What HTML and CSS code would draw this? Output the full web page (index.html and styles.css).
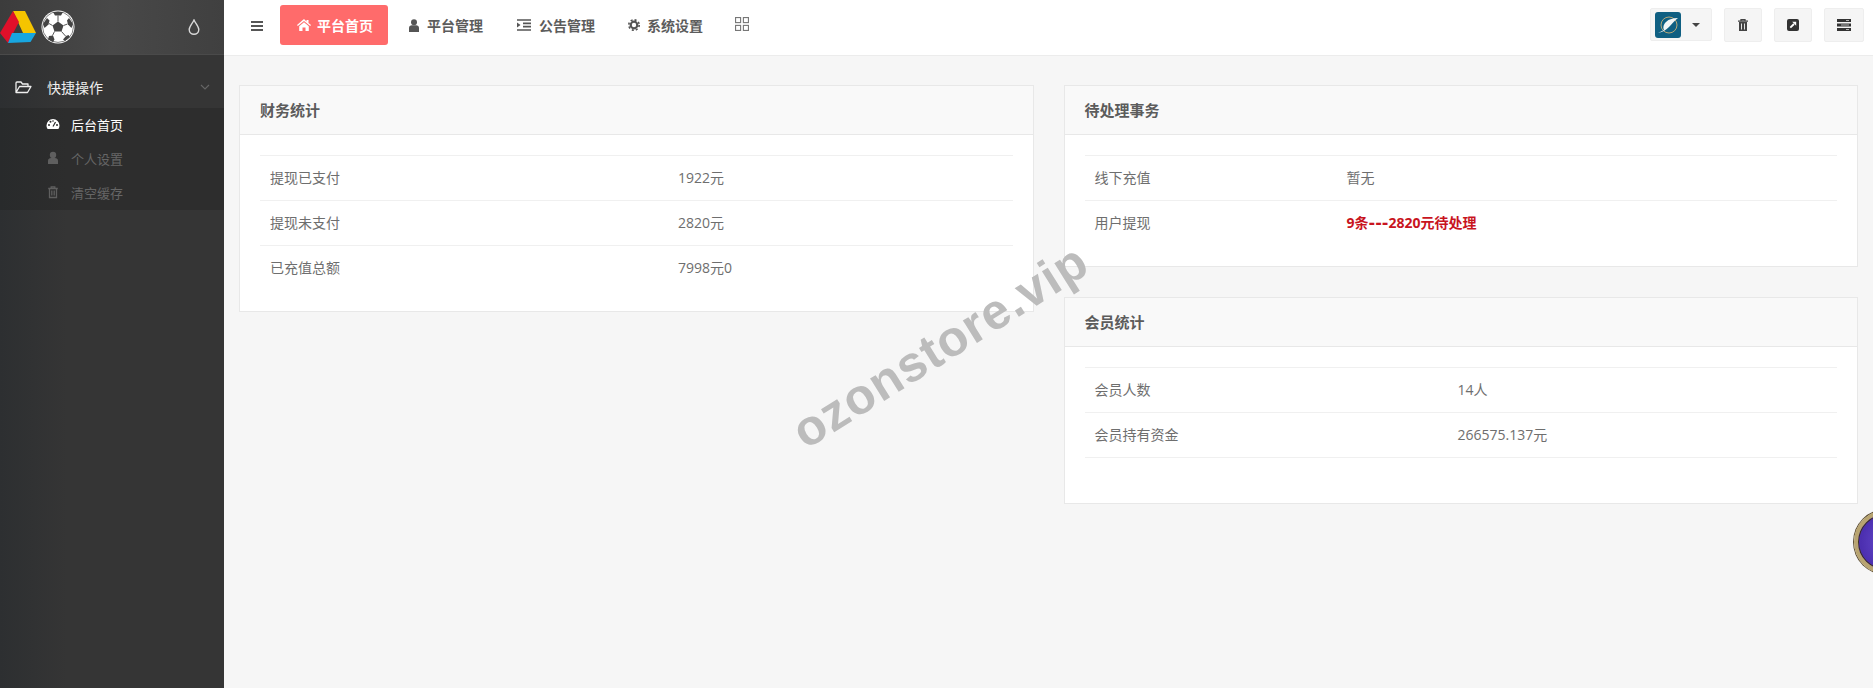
FILE: index.html
```html
<!DOCTYPE html>
<html lang="zh">
<head>
<meta charset="utf-8">
<title>平台首页</title>
<link rel="stylesheet" href="styles.css">
</head>
<body>
<div class="app">
  <aside class="sidebar">
    <div class="brand">
      <svg class="logo" viewBox="0 0 36 32" width="36" height="32">
        <polygon fill="#f5c400" points="13,0 25,0 36,22 23,22"/>
        <polygon fill="#e0102a" points="13,0 19,11 8,32 0,22"/>
        <polygon fill="#18a6e0" points="12,22 36,22 30.500,31 8,32"/>
      </svg>
      <svg class="ball" viewBox="0 0 34 34" width="34" height="34">
        <circle cx="17" cy="17" r="16.500" fill="#fff"/>
        <circle cx="17" cy="17" r="15.400" fill="none" stroke="#4a4a4a" stroke-width=".7"/>
        <g fill="#444">
          <polygon points="17,11.500 22.500,15.500 20.500,21.500 13.500,21.500 11.500,15.500"/>
          <polygon points="12,2 22,2 20,5.500 14,5.500"/>
          <polygon points="28,8 32,14 30.500,18 27,14.500 26,10.500"/>
          <polygon points="2,14 6,8 8.500,10.500 7.500,14.500 3.500,18"/>
          <polygon points="8,26 12,25.500 13.500,29.500 12,32 7,29.500"/>
          <polygon points="25,26 27.500,25 29,27 24,31 22,29.500"/>
        </g>
        <path d="M17 11.500V5.500M22.500 15.500l4-1.500M20.500 21.500l4 4.500M13.500 21.500l-2 4M11.500 15.500l-3.500-2" stroke="#444" stroke-width=".9" fill="none"/>
      </svg>
      <svg class="drop" viewBox="0 0 12 16" width="12" height="16">
        <path d="M6 1C4.800 4 1.200 7.500 1.200 10.500a4.800 4.800 0 0 0 9.600 0C10.800 7.500 7.200 4 6 1z" fill="none" stroke="#d8d8d8" stroke-width="1.400"/>
      </svg>
    </div>
    <nav class="menu">
      <div class="menu-head">
        <svg class="menu-icon" viewBox="0 0 17 13" width="17" height="13">
          <path d="M1 11.500V2a1 1 0 0 1 1-1h4l1.500 2H13v2.500M1 11.500h11.500L16 5.500H4.500z" fill="none" stroke="#eee" stroke-width="1.300" stroke-linejoin="round"/>
        </svg>
        <span class="menu-label">快捷操作</span>
        <svg class="chev" viewBox="0 0 10 6" width="10" height="6"><path d="M1 1l4 4 4-4" fill="none" stroke="#666" stroke-width="1.100"/></svg>
      </div>
      <ul class="submenu">
        <li class="sub-item active">
          <svg class="sub-icon" viewBox="0 0 14 12" width="14" height="12">
            <path d="M7 1a6.500 6.500 0 0 0-6.500 6.500c0 1.500.5 2.900 1.300 3.500h10.400c.8-.6 1.300-2 1.300-3.500A6.500 6.500 0 0 0 7 1z" fill="#fff"/>
            <path d="M7 8.500L9.500 4" stroke="#2b2b2b" stroke-width="1.200"/>
            <circle cx="3" cy="7" r="1" fill="#2b2b2b"/><circle cx="4.500" cy="3.800" r="1" fill="#2b2b2b"/><circle cx="7" cy="3" r=".8" fill="#2b2b2b"/><circle cx="11" cy="7" r="1" fill="#2b2b2b"/>
          </svg>
          <span>后台首页</span>
        </li>
        <li class="sub-item">
          <svg class="sub-icon" viewBox="0 0 14 14" width="14" height="14">
            <circle cx="7" cy="4" r="3.200" fill="#5f5f5f"/><path d="M2 13V9.500C2 8 3.500 7 5 7h4c1.500 0 3 1 3 2.500V13z" fill="#5f5f5f"/>
          </svg>
          <span>个人设置</span>
        </li>
        <li class="sub-item">
          <svg class="sub-icon" viewBox="0 0 14 14" width="14" height="14">
            <path d="M2.200 3.500h9.600M5.200 3.500V1.800h3.600v1.700M3.500 3.500v9h7v-9M5.800 5.500v5M8.200 5.500v5" fill="none" stroke="#5f5f5f" stroke-width="1.300"/>
          </svg>
          <span>清空缓存</span>
        </li>
      </ul>
    </nav>
  </aside>

  <div class="main">
    <header class="topbar">
      <svg class="burger" viewBox="0 0 12 10" width="12" height="10"><path d="M0 1h12M0 5h12M0 9h12" stroke="#555" stroke-width="1.800"/></svg>
      <a class="tab tab-active">
        <svg viewBox="0 0 14 12" width="14" height="12"><path d="M7 0L0 6l.8 1L7 2l6.200 5 .8-1-2.500-2V1h-2v1.400zM2.200 7.200V12h3.300V8.500h3V12h3.300V7.200L7 3.300z" fill="#fff"/></svg>
        <span>平台首页</span>
      </a>
      <a class="tab">
        <svg viewBox="0 0 10 13" width="10" height="13"><circle cx="5" cy="3.300" r="3" fill="#555"/><path d="M0 13V8.800C0 7.300 1.300 6.300 2.800 6.300h4.400C8.700 6.300 10 7.300 10 8.800V13z" fill="#555"/></svg>
        <span>平台管理</span>
      </a>
      <a class="tab">
        <svg viewBox="0 0 14 12" width="14" height="12"><path d="M0 1h14M6 4.300h8M6 7.700h8M0 11h14" stroke="#555" stroke-width="1.700"/><path d="M0 3.500L3.500 6 0 8.500z" fill="#555"/></svg>
        <span>公告管理</span>
      </a>
      <a class="tab tab-gear">
        <svg viewBox="0 0 12 12" width="12" height="12"><circle cx="6" cy="6" r="3.300" fill="none" stroke="#555" stroke-width="2.200"/><circle cx="6" cy="6" r="5.200" fill="none" stroke="#555" stroke-width="1.600" stroke-dasharray="2.040 2.040"/></svg>
        <span>系统设置</span>
      </a>
      <svg class="grid-icon" viewBox="0 0 15 15" width="14" height="14"><g fill="none" stroke="#777" stroke-width="1.200"><rect x=".6" y=".6" width="5.400" height="5.400"/><rect x="9" y=".6" width="5.400" height="5.400"/><rect x=".6" y="9" width="5.400" height="5.400"/><rect x="9" y="9" width="5.400" height="5.400"/></g></svg>
      <div class="tools">
        <div class="user-btn">
          <svg class="avatar" viewBox="0 0 26 26" width="26" height="26">
            <rect width="26" height="26" rx="3" fill="#0f5f82"/>
            <circle cx="14" cy="13" r="8" fill="none" stroke="#b7a878" stroke-width="1"/>
            <path d="M3 21c5-1 8-3 11-6 3-3 5-6 9-9-5 0-9 1-12 4-3 3-3 6-2 8z" fill="#f2f5f6"/>
          </svg>
          <span class="caret"></span>
        </div>
        <button class="tool-btn" type="button">
          <svg viewBox="0 0 10 12" width="10" height="12"><path d="M0 2.200h10M3 2.200V.7h4v1.500" fill="none" stroke="#444" stroke-width="1.300"/><path d="M1 3h8v9H1z" fill="#444"/><path d="M3.500 4.500V10.500M6.500 4.500V10.500" stroke="#f5f5f5" stroke-width=".9"/></svg>
        </button>
        <button class="tool-btn" type="button">
          <svg viewBox="0 0 12 12" width="12" height="12"><rect width="12" height="12" rx="2" fill="#333"/><path d="M3.300 8.700L7 5" stroke="#fff" stroke-width="1.800"/><polygon points="5.200,2.800 9.200,2.800 9.200,6.800" fill="#fff"/></svg>
        </button>
        <button class="tool-btn tool-wide" type="button">
          <svg viewBox="0 0 14 12" width="14" height="12"><rect width="14" height="3" fill="#333"/><rect y="4.500" width="14" height="3" fill="#333"/><rect y="9" width="14" height="3" fill="#333"/><path d="M9 1.500h3M4 6h8M9 10.500h3" stroke="#eee" stroke-width=".7"/></svg>
        </button>
      </div>
    </header>

    <main class="content">
      <div class="col">
        <section class="panel">
          <h2 class="panel-title">财务统计</h2>
          <div class="panel-body">
            <div class="table cols-finance">
              <div class="row"><span class="cell">提现已支付</span><span class="cell">1922元</span></div>
              <div class="row"><span class="cell">提现未支付</span><span class="cell">2820元</span></div>
              <div class="row"><span class="cell">已充值总额</span><span class="cell">7998元0</span></div>
            </div>
          </div>
        </section>
      </div>
      <div class="col">
        <section class="panel">
          <h2 class="panel-title">待处理事务</h2>
          <div class="panel-body">
            <div class="table cols-pending">
              <div class="row"><span class="cell">线下充值</span><span class="cell">暂无</span></div>
              <div class="row"><span class="cell">用户提现</span><span class="cell cell-alert">9条<span class="dash">---</span>2820元待处理</span></div>
            </div>
          </div>
        </section>
        <section class="panel">
          <h2 class="panel-title">会员统计</h2>
          <div class="panel-body">
            <div class="table cols-members">
              <div class="row"><span class="cell">会员人数</span><span class="cell">14人</span></div>
              <div class="row"><span class="cell">会员持有资金</span><span class="cell">266575.137元</span></div>
              <div class="row row-empty"></div>
            </div>
          </div>
        </section>
      </div>
    </main>
  </div>
</div>
<div class="watermark">ozonstore.vip</div>
<div class="float-orb"></div>
</body>
</html>
```
FILE: styles.css
```css
* { box-sizing: border-box; }
html, body { margin: 0; height: 100%; overflow: hidden; }
body {
  background: #f6f6f6;
  color: #666;
  font-family: "Open Sans", "Noto Sans CJK SC", sans-serif;
  font-size: 14px;
}
.app { display: flex; height: 688px; }

.sidebar {
  width: 224px;
  flex: none;
  background: linear-gradient(90deg, #2d2f31, #353535 30%);
}
.brand {
  height: 55px;
  display: flex;
  align-items: center;
  background: linear-gradient(90deg, #3c3c3c, #484848 50%, #404040);
  border-bottom: 1px solid #4a4a4a;
}
.ball { margin-left: 5px; }
.drop { margin-left: 113px; }
.menu { padding-top: 11px; }
.menu-head {
  height: 42px;
  display: flex;
  align-items: center;
  padding-left: 15px;
  color: #eee;
}
.menu-label { margin-left: 15px; }
.chev { margin-left: 97px; }
.submenu {
  list-style: none;
  margin: 0;
  padding: 0;
  background: linear-gradient(90deg, #282a2b, #2d2d2d 30%);
}
.sub-item {
  height: 34px;
  display: flex;
  align-items: center;
  padding: 0 0 2px 46px;
  font-size: 13px;
  color: #666;
}
.sub-item.active { color: #fff; }
.sub-icon { width: 14px; flex: none; margin-right: 11px; }

.main { flex: 1; min-width: 0; display: flex; flex-direction: column; }
.topbar {
  height: 56px;
  flex: none;
  display: flex;
  align-items: flex-start;
  background: #fff;
  border-bottom: 1px solid #ececec;
  padding-left: 27px;
}
.burger { margin-top: 21px; }
.tab {
  height: 40px;
  margin-top: 5px;
  display: flex;
  align-items: center;
  gap: 8px;
  color: #5c5c5c;
  font-weight: 600;
  margin-left: 34px;
}
.tab-active {
  width: 108px;
  margin-left: 17px;
  padding-left: 2px;
  justify-content: center;
  background: #ff6b6b;
  color: #fff;
  border-radius: 3px;
  gap: 6px;
}
.tab-active + .tab { margin-left: 21px; }
.tab-gear { margin-left: 33px; gap: 7px; }
.grid-icon { margin-left: 32px; margin-top: 17px; }
.tools {
  margin-left: auto;
  margin-right: 9px;
  margin-top: 8px;
  display: flex;
  gap: 12px;
}
.user-btn {
  width: 62px;
  height: 33px;
  display: flex;
  align-items: center;
  padding-left: 4px;
  background: #f5f5f5;
  border: 1px solid #eee;
  border-radius: 2px;
}
.avatar { flex: none; }
.caret {
  margin-left: 11px;
  width: 0;
  height: 0;
  border-left: 4px solid transparent;
  border-right: 4px solid transparent;
  border-top: 4px solid #444;
}
.tool-btn {
  width: 38px;
  height: 34px;
  padding: 0;
  display: flex;
  align-items: center;
  justify-content: center;
  background: #f5f5f5;
  border: 1px solid #eee;
  border-radius: 2px;
}
.tool-wide { width: 40px; }

.content {
  flex: 1;
  display: grid;
  grid-template-columns: 1fr 1fr;
  gap: 30px;
  align-items: start;
  padding: 29px 15px 0 15px;
}
.panel {
  background: #fff;
  border: 1px solid #e8e8e8;
  margin-bottom: 30px;
}
.panel-title {
  margin: 0;
  height: 49px;
  line-height: 48px;
  padding: 0 20px;
  font-size: 15px;
  font-weight: 600;
  color: #5c5c5c;
  background: #f9f9f9;
  border-bottom: 1px solid #e8e8e8;
}
.panel-body { padding: 20px 20px 21px; }
.table { display: grid; }
.row {
  display: grid;
  grid-template-columns: inherit;
  height: 45px;
  padding-bottom: 2px;
  align-items: center;
  border-top: 1px solid #f0f0f0;
  color: #6e6e6e;
}
.row-empty { height: 25px; }
.cols-finance { grid-template-columns: 408px 1fr; }
.cols-pending { grid-template-columns: 252px 1fr; }
.cols-members { grid-template-columns: 363px 1fr; }
.table > .row { grid-column: 1 / -1; }
.cell { padding: 0 10px; }
.cell-alert { color: #c8141e; font-weight: 700; }
.dash { font-family: "DejaVu Sans", sans-serif; font-size: 16px; line-height: 1; }

.watermark {
  position: absolute;
  left: 765px;
  top: 316px;
  width: 350px;
  text-align: center;
  font-family: "Liberation Sans", sans-serif;
  font-size: 50px;
  font-weight: 700;
  line-height: 60px;
  color: #bcbcbc;
  white-space: nowrap;
  letter-spacing: 1px;
  transform: rotate(-32deg);
}
.float-orb {
  position: fixed;
  left: 1854px;
  top: 510px;
  width: 64px;
  height: 64px;
  border-radius: 50%;
  background: radial-gradient(circle at 60% 50%, #6a4fd0, #4c2fb0 70%);
  border: 4px solid #b8a470;
  box-shadow: inset 0 0 0 1px #3a2e20, 0 0 0 1px #5a4a30;
}
```
